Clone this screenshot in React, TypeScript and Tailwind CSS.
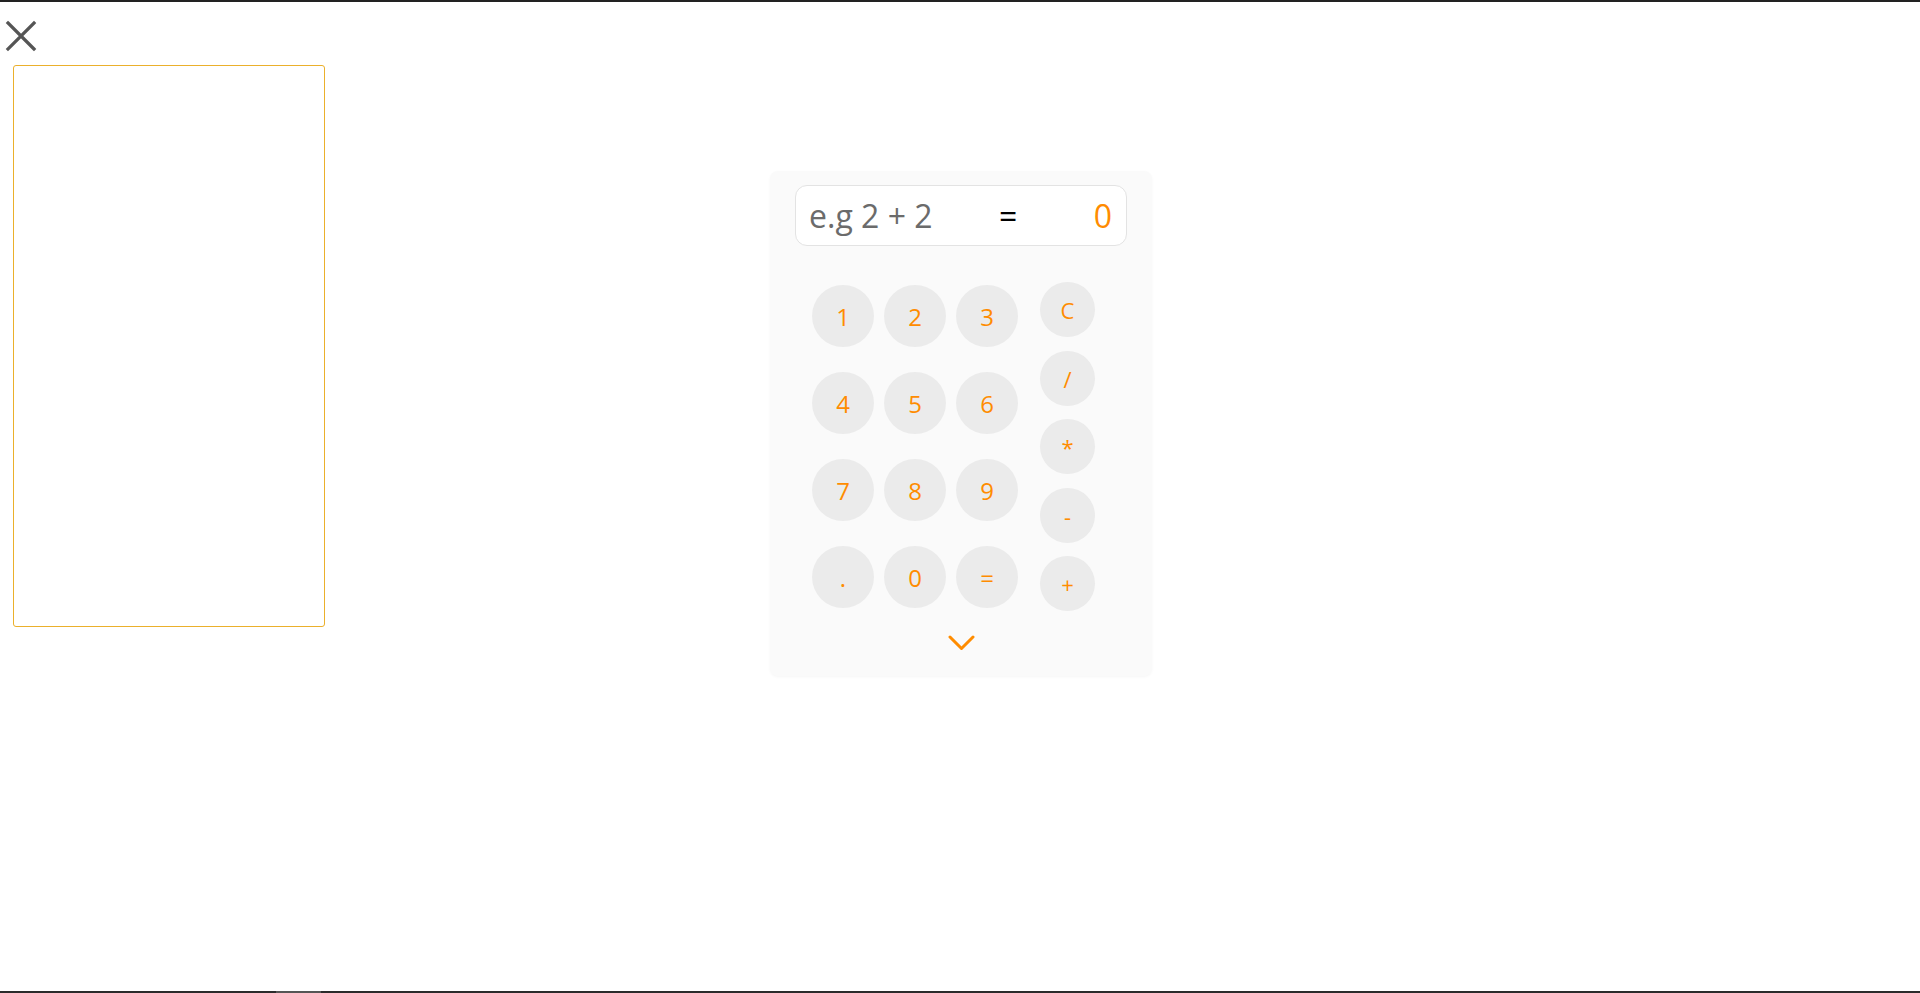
import { useState } from "react";

const digits = ["1", "2", "3", "4", "5", "6", "7", "8", "9", ".", "0", "="];
const operators = ["C", "/", "*", "-", "+"];

const font = { fontFamily: '"Open Sans", "Noto Sans", sans-serif' };

const CloseIcon = () => (
  <svg width="32" height="32" viewBox="0 0 32 32" className="block">
    <path d="M3 3 L29 29 M29 3 L3 29" stroke="#555555" strokeWidth="3.2" strokeLinecap="square" />
  </svg>
);

const Chevron = () => (
  <svg width="27" height="17" viewBox="0 0 27 17" className="block">
    <polyline points="2,2 13.5,13.5 25,2" fill="none" stroke="#ff8c00" strokeWidth="3" strokeLinecap="round" strokeLinejoin="round" />
  </svg>
);

const Calculator = () => {
  const [expr, setExpr] = useState("");

  return (
    <div className="w-[382px] rounded-lg bg-[#fafafa] px-[25px] pt-[14px] pb-[24px] shadow-[0_1px_3px_rgba(0,0,0,0.04)]">
      <div className="flex h-[61px] items-center rounded-xl border border-[#e3e3e3] bg-white pl-[13px] pr-[14px]">
        <input
          value={expr}
          onChange={(e) => setExpr(e.target.value)}
          placeholder="e.g 2 + 2"
          className="w-[190px] bg-transparent text-[32px] text-[#6b6b6b] outline-none placeholder:text-[#6b6b6b]"
        />
        <span className="text-[32px] text-black">=</span>
        <span className="flex-1 text-right text-[32px] text-[#ff8c00]">0</span>
      </div>

      <div className="mt-[36px] flex items-start pl-[17px]">
        <div className="mt-[3px] grid grid-cols-[repeat(3,62px)] gap-x-[10px] gap-y-[25px]">
          {digits.map((d) => (
            <button key={d} className="flex size-[62px] items-center justify-center rounded-full bg-[#ebebeb] pt-[2px] text-[24px] text-[#ff8c00]">
              {d}
            </button>
          ))}
        </div>
        <div className="ml-[22px] flex flex-col gap-[13.5px]">
          {operators.map((o) => (
            <button key={o} className="flex size-[55px] items-center justify-center rounded-full bg-[#ebebeb] pt-[2px] text-[22px] text-[#ff8c00]">
              {o}
            </button>
          ))}
        </div>
      </div>

      <div className="mt-[24px] flex justify-center">
        <Chevron />
      </div>
    </div>
  );
};

const App = () => {
  return (
    <div style={font} className="flex min-h-[993px] flex-col border-t-2 border-[#222222] bg-white">
      <div className="grid flex-1 grid-cols-[1fr_auto_1fr]">
        <div className="flex flex-col items-start">
          <button className="ml-[5px] mt-[18px]">
            <CloseIcon />
          </button>
          <div className="ml-[13px] mt-[13px] h-[562px] w-[312px] rounded-[3px] border border-[#ebb02c] bg-white" />
        </div>
        <div className="pl-[2px] pt-[169px]">
          <Calculator />
        </div>
        <div />
      </div>
      <div className="flex h-[2px] bg-[#2b2b2b]">
        <div className="ml-[276px] w-[45px] bg-[#555555]" />
      </div>
    </div>
  );
};

export default App;
